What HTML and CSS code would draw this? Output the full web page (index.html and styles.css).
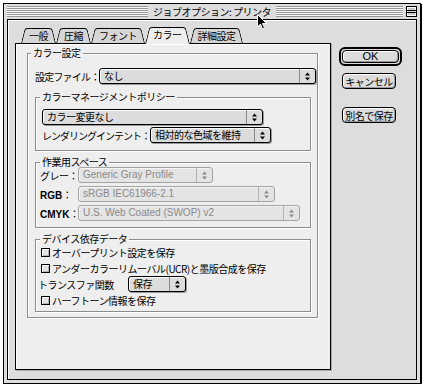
FILE: index.html
```html
<!DOCTYPE html>
<html lang="ja">
<head>
  <meta charset="UTF-8" />
  <title>ジョブオプション: プリンタ</title>
  <link rel="stylesheet" href="styles.css">
</head>
<body>
  <svg class="sprite" xmlns="http://www.w3.org/2000/svg">
    <symbol id="updown" viewBox="0 0 5 9"><path d="M0 3.5 L2.5 0.5 L5 3.5Z M0 5.5 L2.5 8.5 L5 5.5Z"/></symbol>
  </svg>

  <div class="window">
    <div class="titlebar">
      <div class="stripes"></div>
      <div class="title">ジョブオプション: プリンタ</div>
      <div class="title-right">
        <div class="stripes"></div>
        <svg class="shade-box" width="11" height="11" viewBox="0 0 11 11">
          <rect x="0.5" y="0.5" width="10" height="10" fill="#c8c8c8" stroke="#000"/>
          <rect x="1.5" y="1.5" width="8" height="8" fill="none" stroke="#fff" stroke-width="1"/>
          <path d="M1 4.5 H10 M1 6.5 H10" stroke="#000"/>
        </svg>
      </div>
    </div>

    <div class="content">
      <div class="main">
        <div class="tabs">
          <div class="tab">一般</div>
          <div class="tab">圧縮</div>
          <div class="tab">フォント</div>
          <div class="tab active">カラー</div>
          <div class="tab">詳細設定</div>
        </div>

        <div class="panel">
          <fieldset class="group outer">
            <legend>カラー設定</legend>
            <div class="row">
              <span class="label w-file">設定ファイル：</span>
              <div class="popup w-217"><span class="value">なし</span><span class="arrows"><svg class="ud"><use href="#updown"/></svg></span></div>
            </div>

            <fieldset class="group sub policy">
              <legend>カラーマネージメントポリシー</legend>
              <div class="row">
                <div class="popup w-221"><span class="value">カラー変更なし</span><span class="arrows"><svg class="ud"><use href="#updown"/></svg></span></div>
              </div>
              <div class="row gap2">
                <span class="label w-intent">レンダリングインテント：</span>
                <div class="popup w-121"><span class="value">相対的な色域を維持</span><span class="arrows"><svg class="ud"><use href="#updown"/></svg></span></div>
              </div>
            </fieldset>

            <fieldset class="group sub space">
              <legend>作業用スペース</legend>
              <div class="row">
                <span class="label w-space">グレー：</span>
                <div class="popup disabled w-135"><span class="value latin">Generic Gray Profile</span><span class="arrows"><svg class="ud"><use href="#updown"/></svg></span></div>
              </div>
              <div class="row gap3">
                <span class="label w-space"><span class="strong">RGB</span>：</span>
                <div class="popup disabled w-197"><span class="value latin">sRGB IEC61966-2.1</span><span class="arrows"><svg class="ud"><use href="#updown"/></svg></span></div>
              </div>
              <div class="row gap3">
                <span class="label w-space"><span class="strong">CMYK</span>：</span>
                <div class="popup disabled w-222"><span class="value latin">U.S. Web Coated (SWOP) v2</span><span class="arrows"><svg class="ud"><use href="#updown"/></svg></span></div>
              </div>
            </fieldset>

            <fieldset class="group sub device">
              <legend>デバイス依存データ</legend>
              <div class="row"><span class="check"></span>オーバープリント設定を保存</div>
              <div class="row"><span class="check"></span>アンダーカラーリムーバル(UCR)と墨版合成を保存</div>
              <div class="row">
                <span class="label w-transfer">トランスファ関数</span>
                <div class="popup w-58"><span class="value">保存</span><span class="arrows"><svg class="ud"><use href="#updown"/></svg></span></div>
              </div>
              <div class="row"><span class="check"></span>ハーフトーン情報を保存</div>
            </fieldset>
          </fieldset>
        </div>
      </div>

      <div class="side">
        <div class="ring"><button class="btn ok">OK</button></div>
        <button class="btn cancel">キャンセル</button>
        <button class="btn save">別名で保存</button>
      </div>
    </div>
  </div>

  <svg class="cursor" width="11" height="17" viewBox="0 0 11 17">
    <path d="M0.5 0.5 V13 L3.5 10 L5.5 15 L7.5 14 L5.5 9.5 H9.5 Z" fill="#000" stroke="#fff" stroke-width="1"/>
  </svg>
</body>
</html>
```

FILE: styles.css
```css
body { margin: 0; background: #fff; font-family: "Noto Sans CJK JP", sans-serif; font-size: 10px; letter-spacing: -0.5px; color: #000; }
.sprite { display: none; }

.window { box-sizing: border-box; width: 418px; height: 381px; margin: 3px 0 0 3px; border: 1px solid #000; box-shadow: 1px 1px 0 #000; background: #ddd; padding: 0 3px 3px; display: flex; flex-direction: column; }

.titlebar { height: 15px; display: grid; grid-template-columns: 1fr auto 1fr; align-items: center; }
.stripes { height: 11px; background: repeating-linear-gradient(to bottom, #9a9a9a 0 1px, #f6f6f6 1px 2px); }
.title { padding: 0 5px; line-height: 15px; white-space: nowrap; }
.title-right { display: flex; align-items: center; gap: 3px; }
.title-right .stripes { flex: 1; }
.shade-box { display: block; }

.content { flex: 1; display: flex; border: 1px solid #000; box-shadow: inset 1px 1px 0 #fff; padding: 7px 0 0 7px; }
.main { width: 316px; }

.tabs { display: flex; align-items: flex-end; height: 16px; padding-left: 6px; position: relative; z-index: 1; }
.tab { position: relative; z-index: 0; height: 15px; line-height: 15px; padding: 0 8px; white-space: nowrap; }
.tab::before, .tab::after { content: ""; position: absolute; top: 0; bottom: 0; width: 60%; background: #d6d6d6; border-top: 1px solid #000; z-index: -1; box-sizing: border-box; }
.tab::before { left: 0; border-left: 1px solid #000; border-top-left-radius: 3px; transform: skewX(-14deg); transform-origin: bottom left; }
.tab::after { right: 0; border-right: 1px solid #000; border-top-right-radius: 3px; transform: skewX(14deg); transform-origin: bottom right; }
.tab.active { height: 16px; line-height: 16px; }
.tab.active::before, .tab.active::after { background: #eee; bottom: -1px; }

.panel { box-sizing: border-box; height: 327px; background: #eee; border: 1px solid #000; box-shadow: inset 1px 1px 0 #fff, 1px 1px 0 #a8a8a8; padding: 4px 0 0 11px; }

.group { margin: 0; min-width: 0; box-sizing: border-box; border: 1px solid #8c8c8c; box-shadow: 1px 1px 0 #fff, inset 1px 1px 0 #fff; }
.group legend { padding: 0 2px; line-height: 10px; background: #eee; white-space: nowrap; }
.outer { width: 291px; padding: 10px 0 5px 7px; }
.outer > legend { margin-left: -4px; }
.sub { width: 276px; }
.policy { margin-top: 8px; padding: 7px 0 7px 6px; }
.policy > legend { margin-left: -2px; }
.space { margin-top: 6px; padding: 0 0 6px 4px; }
.device { margin-top: 6px; padding: 0 0 3px 5px; }
.device > legend { margin-left: -1px; }

.row { display: flex; align-items: center; height: 16px; white-space: nowrap; }
.gap2 { margin-top: 2px; }
.gap3 { margin-top: 3px; }
.label { flex: none; }
.w-file { width: 64px; letter-spacing: -0.8px; }
.w-intent { width: 108px; letter-spacing: -1px; }
.w-space { width: 38px; }
.w-transfer { width: 90px; margin-left: -3px; }
.strong { font-family: "Liberation Sans", sans-serif; font-weight: bold; letter-spacing: 0; font-size: 10px; }

.popup { box-sizing: border-box; height: 16px; display: flex; border: 1px solid #000; border-radius: 3px; background: #dcdcdc; box-shadow: inset 1px 1px 0 #fff, 1px 1px 0 #9a9a9a; }
.popup .value { flex: 1; padding-left: 4px; line-height: 14px; overflow: hidden; white-space: nowrap; }
.popup .arrows { width: 15px; border-left: 1px solid #8a8a8a; display: flex; align-items: center; justify-content: center; }
.popup .ud { width: 5px; height: 9px; fill: #000; }
.popup.disabled { border-color: #a4a4a4; background: #e4e4e4; color: #8a8a8a; box-shadow: inset 1px 1px 0 #f4f4f4; }
.popup.disabled .arrows { border-left-color: #b4b4b4; }
.popup.disabled .ud { fill: #8a8a8a; }
.latin { font-family: "Liberation Sans", sans-serif; letter-spacing: 0; }

.w-217 { width: 217px; }
.w-221 { width: 221px; }
.w-121 { width: 121px; }
.w-135 { width: 135px; }
.w-197 { width: 197px; }
.w-222 { width: 222px; }
.w-58 { width: 58px; }

.check { box-sizing: border-box; width: 9px; height: 9px; border: 1px solid #000; background: #e4e4e4; box-shadow: inset 1px 1px 0 #fff, inset -1px -1px 0 #b0b0b0; margin-right: 2px; flex: none; }

.side { display: flex; flex-direction: column; align-items: flex-start; margin-left: 8px; padding-top: 20px; }
.btn { box-sizing: border-box; font: inherit; letter-spacing: -0.5px; color: #000; border: 1px solid #000; border-radius: 4px; background: #dcdcdc; box-shadow: inset 1px 1px 0 #fff, inset -1px -1px 0 #999; padding: 0; }
.ring { box-sizing: border-box; width: 63px; height: 19px; border: 2px solid #000; border-radius: 6px; padding: 1px; background: #ddd; display: flex; }
.ok { flex: 1; font-family: "Liberation Sans", sans-serif; letter-spacing: 0; font-size: 11px; line-height: 11px; }
.cancel, .save { width: 54px; height: 16px; margin-left: 3px; }
.cancel { margin-top: 7px; }
.save { margin-top: 18px; }

.cursor { position: absolute; left: 257px; top: 14px; }
```
